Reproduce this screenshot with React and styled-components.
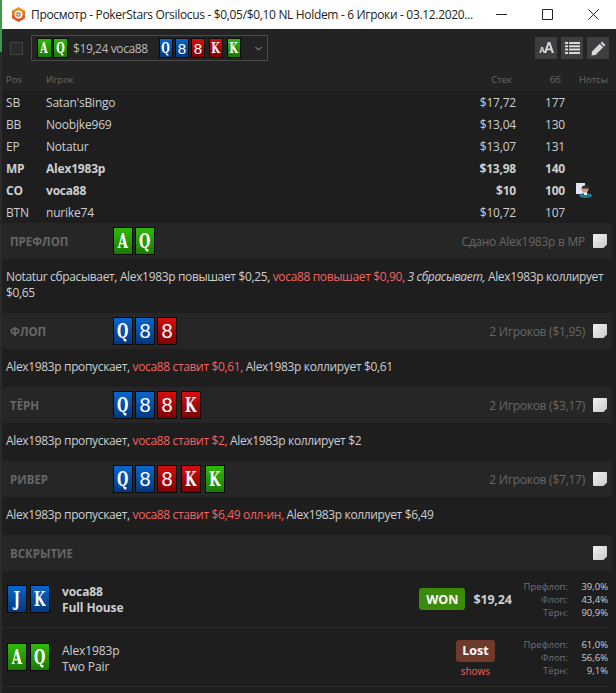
import React from "react";
import styled, { createGlobalStyle } from "styled-components";

const GlobalStyle = createGlobalStyle`
  html, body {
    margin: 0;
    padding: 0;
    background: #1e1e1e;
    overflow: hidden;
  }
`;

const SUITS = {
  s: "linear-gradient(#2fb80a, #1c7a02)",
  b: "linear-gradient(#0a66cc, #02387e)",
  r: "linear-gradient(#d40f0f, #7c0202)",
};

const players = [
  { pos: "SB", name: "Satan'sBingo", stack: "$17,72", bb: "177" },
  { pos: "BB", name: "Noobjke969", stack: "$13,04", bb: "130" },
  { pos: "EP", name: "Notatur", stack: "$13,07", bb: "131" },
  { pos: "MP", name: "Alex1983p", stack: "$13,98", bb: "140", hero: true },
  { pos: "CO", name: "voca88", stack: "$10", bb: "100", hero: true, note: true },
  { pos: "BTN", name: "nurike74", stack: "$10,72", bb: "107" },
];

const Page = styled.div`
  width: 616px;
  height: 693px;
  overflow: hidden;
  display: flex;
  font-family: "Open Sans", "Noto Sans", sans-serif;
  font-size: 12px;
  color: #cecece;
  background: #1e1e1e;
`;

// sliver of the window behind this one
const BackWindow = styled.div`
  width: 2px;
  flex: none;
  background: linear-gradient(#3c9a4c 52px, #2b2b2b 52px);
`;

const Main = styled.div`
  flex: 1;
  min-width: 0;
  display: flex;
  flex-direction: column;
`;

const TitleBar = styled.div`
  height: 29px;
  flex: none;
  background: #fff;
  color: #222;
  display: flex;
  align-items: center;
  padding-left: 9px;
  font-size: 12px;
  letter-spacing: -0.33px;
  white-space: nowrap;
`;

const TitleText = styled.span`
  margin-left: 5px;
  flex: 1;
`;

const WinButton = styled.div`
  width: 46px;
  height: 29px;
  display: flex;
  align-items: center;
  justify-content: center;
`;

const Toolbar = styled.div`
  height: 38px;
  flex: none;
  background: #232323;
  display: flex;
  align-items: center;
  padding: 0 7px 0 8px;
`;

const Check = styled.div`
  width: 11px;
  height: 11px;
  border: 1px solid #444;
  background: #2a2a2a;
  margin-right: 8px;
`;

const HandSelect = styled.div`
  width: 237px;
  height: 26px;
  box-sizing: border-box;
  border: 1px solid #4a4a4a;
  display: flex;
  align-items: center;
  padding-left: 5px;
  color: #bbb;
`;

const SelectLabel = styled.span`
  margin: 0 11px 0 4px;
  font-size: 12px;
  letter-spacing: -0.4px;
  white-space: nowrap;
`;

const Chevron = styled.span`
  margin-left: auto;
  margin-right: 5px;
  display: flex;
`;

const Tools = styled.div`
  margin-left: auto;
  display: flex;
  gap: 4px;
`;

const ToolButton = styled.div`
  width: 22px;
  height: 22px;
  background: #3e3e42;
  color: #d8d8d8;
  display: flex;
  align-items: center;
  justify-content: center;
`;

const Card = styled.div`
  box-sizing: border-box;
  flex: none;
  width: ${(p) => (p.$small ? 14.5 : 20)}px;
  height: ${(p) => (p.$small ? 20 : 28)}px;
  margin-right: ${(p) => p.$gap}px;
  margin-left: ${(p) => (p.$push ? 2 : 0)}px;
  border: 1px solid #0a0a0a;
  background: ${(p) => SUITS[p.$suit]};
  color: #fff;
  display: flex;
  align-items: center;
  justify-content: center;
  font-size: ${(p) => (p.$small ? 15 : 20)}px;
  line-height: 1;
`;

const Glyph = styled.span`
  display: block;
  font-family: ${(p) =>
    p.$digit ? '"Liberation Sans", sans-serif' : '"DejaVu Serif", serif'};
  font-weight: ${(p) => (p.$digit ? 400 : 700)};
  transform: scaleX(${(p) => (p.$digit ? 1 : 0.65)});
`;

const TableHead = styled.div`
  height: 24px;
  flex: none;
  background: #232323;
  display: grid;
  grid-template-columns: 40px 1fr 60px 49px 51px;
  align-items: center;
  padding-left: 4px;
  font-size: 9.5px;
  color: #6a6a6a;
`;

const Right = styled.span`
  text-align: right;
  padding-right: ${(p) => p.$pad || 0}px;
`;

const PlayerRow = styled.div`
  height: 22px;
  display: grid;
  grid-template-columns: 40px 1fr 60px 49px 51px;
  align-items: center;
  padding-left: 4px;
  font-weight: ${(p) => (p.$hero ? 700 : 400)};
  letter-spacing: -0.2px;
`;

const NoteCell = styled.span`
  padding-left: 11px;
  display: flex;
`;

const StreetBar = styled.div`
  height: 36px;
  flex: none;
  margin-right: 4px;
  background: #262626;
  display: flex;
  align-items: center;
  padding-left: 8px;
`;

const StreetName = styled.div`
  width: 103px;
  font-size: 11.5px;
  font-weight: 700;
  color: #666;
`;

const StreetCards = styled.div`
  display: flex;
`;

const StreetInfo = styled.div`
  margin-left: auto;
  margin-right: 5px;
  color: #666;
  font-size: 12px;
  letter-spacing: -0.25px;
  display: flex;
  align-items: center;
  gap: 8px;
`;

const NoteIcon = styled.span`
  width: 14px;
  height: 14px;
  display: block;
  background: linear-gradient(135deg, #f2f2f2, #c9c9c9);
  border-radius: 1px;
  clip-path: polygon(0 0, 100% 0, 100% 75%, 75% 100%, 0 100%);
`;

const Action = styled.div`
  flex: none;
  height: ${(p) => (p.$tall ? 54 : 38)}px;
  box-sizing: border-box;
  padding: 10px 4px 0;
  line-height: 16px;
  font-size: 12px;
  letter-spacing: -0.35px;
`;

const Hero = styled.span`
  color: #f06464;
`;

const Showdown = styled.div`
  height: ${(p) => p.$height}px;
  flex: none;
  box-sizing: border-box;
  margin-right: 4px;
  border-bottom: 1px solid #2a2a2a;
  display: flex;
  align-items: center;
  padding-left: 5px;
`;

const WinnerInfo = styled.div`
  margin-left: 9px;
  padding-top: ${(p) => (p.$bold ? 2 : 3)}px;
  line-height: 16px;
  font-weight: ${(p) => (p.$bold ? 700 : 400)};
  letter-spacing: -0.1px;
`;

const ResultBox = styled.div`
  margin-left: auto;
  display: flex;
  align-items: center;
  flex-direction: ${(p) => (p.$col ? "column" : "row")};
  margin-right: ${(p) => (p.$col ? 29 : 12)}px;
  padding-top: ${(p) => (p.$col ? 3 : 0)}px;
`;

const Badge = styled.div`
  height: 22px;
  padding: 0 ${(p) => (p.$won ? 7 : 6)}px;
  border-radius: 3px;
  display: flex;
  align-items: center;
  color: #fff;
  font-weight: 700;
  font-size: 12.5px;
  background: ${(p) => (p.$won ? "#3c8a0c" : "#6e3a2c")};
`;

const Amount = styled.div`
  margin-left: 8px;
  font-weight: 700;
  font-size: 12.5px;
  letter-spacing: -0.2px;
`;

const Shows = styled.div`
  color: #f06464;
  font-size: 10px;
  line-height: 13px;
  margin-top: 3px;
`;

const Odds = styled.div`
  display: grid;
  grid-template-columns: auto 40px;
  font-size: 9.5px;
  line-height: 13px;
  text-align: right;
  margin-right: 4px;
`;

const OddsLabel = styled.span`
  color: #727272;
`;

const Cards = ({ list, small, gap = 2 }) =>
  list.split(" ").map((c, i) => (
    <Card key={i} $small={small} $gap={gap} $suit={c[1]} $push={c[0] === "K" && i > 1}>
      <Glyph $digit={/\d/.test(c[0])}>{c[0]}</Glyph>
    </Card>
  ));

const Street = ({ name, cards, info }) => (
  <StreetBar>
    <StreetName>{name}</StreetName>
    {cards && (
      <StreetCards>
        <Cards list={cards} />
      </StreetCards>
    )}
    <StreetInfo>
      {info}
      <NoteIcon />
    </StreetInfo>
  </StreetBar>
);

const OddsTable = ({ a, b, c }) => (
  <Odds>
    <OddsLabel>Префлоп:</OddsLabel>
    <span>{a}</span>
    <OddsLabel>Флоп:</OddsLabel>
    <span>{b}</span>
    <OddsLabel>Тёрн:</OddsLabel>
    <span>{c}</span>
  </Odds>
);

const App = () => (
  <Page>
    <GlobalStyle />
    <BackWindow />
    <Main>
      <TitleBar>
        <svg width="15" height="15" viewBox="0 0 15 15">
          <defs>
            <linearGradient id="logo" x1="0" y1="0" x2="0" y2="1">
              <stop offset="0" stopColor="#f0a020" />
              <stop offset="1" stopColor="#d8401c" />
            </linearGradient>
          </defs>
          <path d="M7.500 0 14 3.700v7.600L7.500 15 1 11.300V3.700z" fill="url(#logo)" />
          <circle cx="7.500" cy="7.500" r="4" fill="#fff" />
          <rect x="5.500" y="5.500" width="4" height="4" fill="#8a5a3a" />
          <rect x="6.500" y="6.500" width="2" height="2" fill="#fff" />
        </svg>
        <TitleText>Просмотр - PokerStars Orsilocus - $0,05/$0,10 NL Holdem - 6 Игроки - 03.12.2020...</TitleText>
        <WinButton>
          <svg width="11" height="11" viewBox="0 0 11 11"><path d="M0 5.500h11" stroke="#222" /></svg>
        </WinButton>
        <WinButton>
          <svg width="11" height="11" viewBox="0 0 11 11"><path d="M.5.500h10v10H.5z" stroke="#222" fill="none" /></svg>
        </WinButton>
        <WinButton>
          <svg width="11" height="11" viewBox="0 0 11 11"><path d="M.5.500l10 10M10.500.500l-10 10" stroke="#222" fill="none" /></svg>
        </WinButton>
      </TitleBar>

      <Toolbar>
        <Check />
        <HandSelect>
          <Cards small gap={1.5} list="As Qs" />
          <SelectLabel>$19,24 voca88</SelectLabel>
          <Cards small gap={1.5} list="Qb 8b 8r Kr Ks" />
          <Chevron>
            <svg width="7" height="5" viewBox="0 0 7 5"><path d="M.5 1 3.500 4l3-3" stroke="#aaa" fill="none" /></svg>
          </Chevron>
        </HandSelect>
        <Tools>
          <ToolButton>
            <svg width="16" height="14" viewBox="0 0 16 14" fill="#d8d8d8">
              <path d="M9.800 1h2.400L16 12h-2.300l-.8-2.700H9.100L8.300 12H6zM9.700 7.500h2.600L11 3.500zM3.300 6H5l2 6H5.600l-.4-1.400H3.100L2.700 12H1.300zM3.400 9.500h1.400L4.100 7.200z" />
            </svg>
          </ToolButton>
          <ToolButton>
            <svg width="15" height="12" viewBox="0 0 15 12" fill="#d8d8d8">
              <path d="M0 0h3v2H0zM4 0h11v2H4zM0 3.300h3v2H0zM4 3.300h11v2H4zM0 6.600h3v2H0zM4 6.600h11v2H4zM0 10h3v2H0zM4 10h11v2H4z" />
            </svg>
          </ToolButton>
          <ToolButton>
            <svg width="15" height="15" viewBox="0 0 15 15" fill="#d8d8d8">
              <path d="M11 .5 14.500 4l-1.500 1.500L9.500 2zM8.700 2.800l3.500 3.500L4.500 14 .5 14.500 1 10.500z" />
            </svg>
          </ToolButton>
        </Tools>
      </Toolbar>

      <TableHead>
        <span>Pos</span>
        <span>Игрок</span>
        <Right $pad={4}>Стек</Right>
        <Right $pad={4}>бб</Right>
        <Right $pad={8}>Нотсы</Right>
      </TableHead>
      {players.map((p) => (
        <PlayerRow key={p.pos} $hero={p.hero}>
          <span>{p.pos}</span>
          <span>{p.name}</span>
          <Right>{p.stack}</Right>
          <Right>{p.bb}</Right>
          <NoteCell>
            {p.note && (
              <svg width="16" height="15" viewBox="0 0 16 15">
                <rect x="0" y="0" width="9" height="11" fill="#e6e6f2" />
                <ellipse cx="9.500" cy="12.500" rx="6.500" ry="2.500" fill="#1c7d95" />
                <rect x="8" y="9" width="3" height="3" fill="#eee" />
                <circle cx="9" cy="6" r="3.500" fill="#c99a80" />
                <path d="M5.500 5.500c0-4 7-4 7 0z" fill="#2a2a2a" />
              </svg>
            )}
          </NoteCell>
        </PlayerRow>
      ))}

      <Street name="ПРЕФЛОП" cards="As Qs" info="Сдано Alex1983p в MP" />
      <Action $tall>
        Notatur сбрасывает, Alex1983p повышает $0,25, <Hero>voca88 повышает $0,90,</Hero>{" "}
        <i>3 сбрасывает,</i> Alex1983p коллирует $0,65
      </Action>
      <Street name="ФЛОП" cards="Qb 8b 8r" info="2 Игроков ($1,95)" />
      <Action>
        Alex1983p пропускает, <Hero>voca88 ставит $0,61,</Hero> Alex1983p коллирует $0,61
      </Action>
      <Street name="ТЁРН" cards="Qb 8b 8r Kr" info="2 Игроков ($3,17)" />
      <Action>
        Alex1983p пропускает, <Hero>voca88 ставит $2,</Hero> Alex1983p коллирует $2
      </Action>
      <Street name="РИВЕР" cards="Qb 8b 8r Kr Ks" info="2 Игроков ($7,17)" />
      <Action>
        Alex1983p пропускает, <Hero>voca88 ставит $6,49 олл-ин,</Hero> Alex1983p коллирует $6,49
      </Action>
      <Street name="ВСКРЫТИЕ" />

      <Showdown $height={57}>
        <Cards gap={3} list="Jb Kb" />
        <WinnerInfo $bold>
          voca88
          <br />
          Full House
        </WinnerInfo>
        <ResultBox>
          <Badge $won>WON</Badge>
          <Amount>$19,24</Amount>
        </ResultBox>
        <OddsTable a="39,0%" b="43,4%" c="90,9%" />
      </Showdown>
      <Showdown $height={59}>
        <Cards gap={3} list="As Qs" />
        <WinnerInfo>
          Alex1983p
          <br />
          Two Pair
        </WinnerInfo>
        <ResultBox $col>
          <Badge>Lost</Badge>
          <Shows>shows</Shows>
        </ResultBox>
        <OddsTable a="61,0%" b="56,6%" c="9,1%" />
      </Showdown>
    </Main>
  </Page>
);

export default App;
